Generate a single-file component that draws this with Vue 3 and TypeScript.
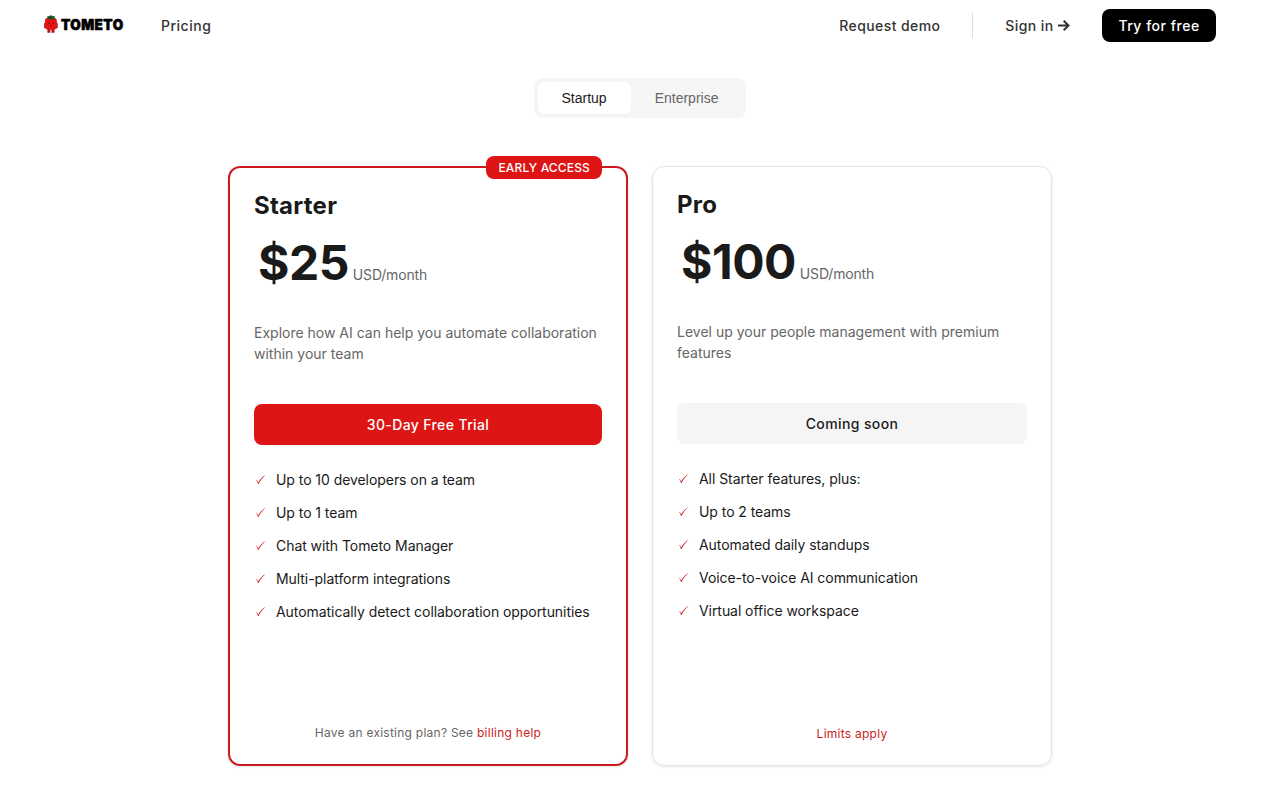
<script setup lang="ts">
import { ref } from 'vue'

interface Plan {
  name: string
  price: string
  description: string
  action: string
  features: string[]
  featured: boolean
}

const tabs = ['Startup', 'Enterprise']
const activeTab = ref('Startup')

const plans: Plan[] = [
  {
    name: 'Starter',
    price: '$25',
    description: 'Explore how AI can help you automate collaboration within your team',
    action: '30-Day Free Trial',
    features: [
      'Up to 10 developers on a team',
      'Up to 1 team',
      'Chat with Tometo Manager',
      'Multi-platform integrations',
      'Automatically detect collaboration opportunities',
    ],
    featured: true,
  },
  {
    name: 'Pro',
    price: '$100',
    description: 'Level up your people management with premium features',
    action: 'Coming soon',
    features: [
      'All Starter features, plus:',
      'Up to 2 teams',
      'Automated daily standups',
      'Voice-to-voice AI communication',
      'Virtual office workspace',
    ],
    featured: false,
  },
]
</script>

<template>
  <div class="page">
    <header class="nav">
      <a class="logo">
        <svg width="84" height="24" viewBox="0 0 84 24">
          <path d="M4.4 16h3v3.8h-3zM8.5 16h3v3.8h-3z" fill="#a51a1c" />
          <path d="M2.8 9 1.1 10.4v4.4l1.7 1zM13 9l1.7 1.4v4.4l-1.7 1z" fill="#981f20" />
          <rect x="1.9" y="4.4" width="12" height="12.4" rx="4" fill="#e81313" />
          <path d="M3.8 6 4.7 4.4 4.2 3l2.2.2L7.900 2l1.500 1.200 2.300-.2-.4 1.500 1 1.500-2.600-.3-1.800 1.300-1.700-1.300z" fill="#174f27" />
          <path d="M4.9 9.400h1.500v1H4.900zM9.500 9.400H11v1H9.500zM6.900 12.500H9v.7H6.900z" fill="#57080b" />
          <text class="wordmark" x="17.9" y="17.2" textLength="62.7" lengthAdjust="spacingAndGlyphs">TOMETO</text>
        </svg>
      </a>
      <a class="link pricing">Pricing</a>
      <div class="right">
        <a class="link demo">Request demo</a>
        <span class="divider"></span>
        <a class="link sign">Sign in
          <svg width="12" height="12" viewBox="0 0 12 12" fill="none" stroke="currentColor" stroke-width="2">
            <path d="M0 5.500h10.500M5.700.7 10.500 5.500 5.700 10.300" />
          </svg>
        </a>
        <a class="try">Try for free</a>
      </div>
    </header>

    <main>
      <div class="tabs">
        <button
          v-for="tab in tabs"
          :key="tab"
          class="tab"
          :class="{ active: tab === activeTab }"
          @click="activeTab = tab"
        >{{ tab }}</button>
      </div>

      <div class="plans">
        <section v-for="plan in plans" :key="plan.name" class="card" :class="{ featured: plan.featured }">
          <span v-if="plan.featured" class="badge">EARLY ACCESS</span>
          <h2>{{ plan.name }}</h2>
          <div class="price"><span class="amount">{{ plan.price }}</span><span class="unit">USD/month</span></div>
          <p class="description">{{ plan.description }}</p>
          <button class="action">{{ plan.action }}</button>
          <ul>
            <li v-for="feature in plan.features" :key="feature">
              <svg class="check" width="14" height="21" viewBox="0 0 14 21">
                <path d="M2.7 11.1c.6.5 1 1.3 1.4 2.5C6 10.2 8.3 7.7 11.6 5.7 8.5 8.5 6.2 11.5 4.5 15.1H3.900C3.5 13.3 3.1 12.2 2.2 11.6z" fill="currentColor" />
              </svg>
              {{ feature }}
            </li>
          </ul>
          <footer v-if="plan.featured">Have an existing plan? See <a>billing help</a></footer>
          <footer v-else><a>Limits apply</a></footer>
        </section>
      </div>
    </main>
  </div>
</template>

<style>
body {
  background: #fff;
}
</style>

<style scoped>
.page {
  height: 800px;
  overflow: hidden;
  font-family: Inter, sans-serif;
  color: #1a1a1a;
  background: #fff;
}
.nav {
  box-sizing: border-box;
  height: 50px;
  padding: 1px 64px 0 43px;
  display: flex;
  align-items: center;
}
.logo {
  display: flex;
  margin-top: -1px;
}
.logo svg {
  overflow: visible;
}
.wordmark {
  font: 900 14.5px/16px Inter, sans-serif;
  letter-spacing: 0.5px;
  fill: #000;
  stroke: #000;
  stroke-width: 0.6px;
  stroke-linejoin: round;
}
.link {
  font-size: 14px;
  font-weight: 500;
  letter-spacing: 0.5px;
  line-height: 20px;
  color: #333;
}
.pricing {
  margin-left: 34px;
}
.demo {
  letter-spacing: 0.4px;
}
.right {
  margin-left: auto;
  display: flex;
  align-items: center;
}
.divider {
  width: 1px;
  height: 25px;
  margin: 0 32px;
  background: #ddd;
}
.sign {
  display: flex;
  align-items: center;
  gap: 4.5px;
  letter-spacing: 0.4px;
}
.try {
  box-sizing: border-box;
  width: 114px;
  height: 33px;
  margin-left: 32px;
  border-radius: 8px;
  background: #000;
  color: #fff;
  font-size: 14px;
  font-weight: 500;
  letter-spacing: 0.5px;
  line-height: 33px;
  text-align: center;
}
.tabs {
  box-sizing: border-box;
  width: 212px;
  height: 40px;
  margin: 28px auto 48px;
  padding: 4px;
  display: flex;
  border-radius: 8px;
  background: #f6f6f6;
}
.tab {
  padding: 8px 24px;
  border: 0;
  border-radius: 6px;
  background: transparent;
  color: #666;
  font: 14px/16px "Liberation Sans", Arial, sans-serif;
}
.tab.active {
  padding-left: 23.5px;
  background: #fff;
  color: #1a1a1a;
  box-shadow: 0 1px 3px rgba(0, 0, 0, 0.03);
}
.plans {
  display: flex;
  justify-content: center;
  gap: 24px;
}
.card {
  position: relative;
  box-sizing: border-box;
  width: 400px;
  height: 600px;
  padding: 24px;
  display: flex;
  flex-direction: column;
  border: 1px solid #e5e5e5;
  border-radius: 12px;
  box-shadow: 0 1px 3px rgba(0, 0, 0, 0.1);
}
.card.featured {
  border: 2px solid #cb1b20;
}
.badge {
  position: absolute;
  top: -12px;
  right: 24px;
  padding: 4px 12px;
  border-radius: 8px;
  background: #dd1515;
  color: #fff;
  font-size: 12px;
  font-weight: 500;
  line-height: 15px;
  letter-spacing: 0.16px;
}
h2 {
  margin: 0;
  font-size: 24px;
  font-weight: 700;
  line-height: 27px;
  letter-spacing: 0.25px;
}
.price {
  margin: 15px 0 30px;
  padding-left: 4px;
  display: flex;
  align-items: baseline;
  gap: 4px;
}
.amount {
  font-size: 48px;
  font-weight: 700;
  line-height: 58px;
  letter-spacing: -0.5px;
}
.unit {
  font-size: 14px;
  color: #666;
  letter-spacing: -0.18px;
}
.description {
  margin: 0;
  height: 42px;
  font-size: 14px;
  line-height: 21px;
  color: #666;
}
.action {
  height: 41px;
  margin: 40px 0 24px;
  padding: 0;
  flex: none;
  border: 0;
  border-radius: 8px;
  background: #f5f5f5;
  color: #1a1a1a;
  font: 500 14px/17px Inter, sans-serif;
  letter-spacing: 0.38px;
}
.featured .action {
  background: #dd1515;
  color: #fff;
}
ul {
  margin: 0;
  padding: 0;
  list-style: none;
}
li {
  display: flex;
  gap: 8px;
  margin-bottom: 12px;
  font-size: 14px;
  line-height: 21px;
  letter-spacing: -0.06px;
}
.check {
  flex: none;
  color: #cb1b20;
}
footer {
  margin-top: auto;
  text-align: center;
  font-size: 12px;
  line-height: 15px;
  letter-spacing: 0.25px;
  color: #666;
}
footer a {
  color: #cb1b20;
}
</style>
